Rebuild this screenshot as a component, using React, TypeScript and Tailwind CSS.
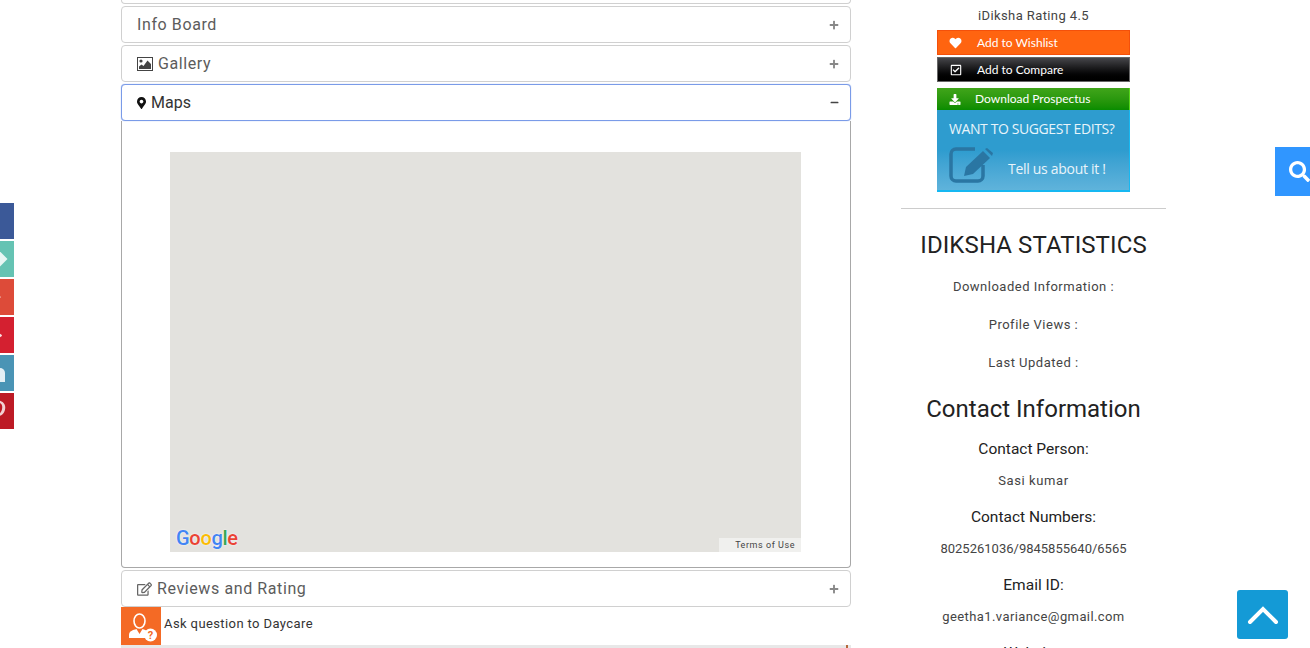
import React from 'react'
import { FaHeart, FaRegCheckSquare, FaDownload, FaMapMarkerAlt, FaRegEdit, FaPlus, FaMinus, FaSearch, FaFacebookF, FaGooglePlusG, FaPlay, FaPinterestP } from 'react-icons/fa'

const din = "font-['Roboto',sans-serif]"
const lato = "font-['Lato',sans-serif]"
const open = "font-['Open_Sans',sans-serif]"

const socials = [
  { bg: 'bg-[#3b5998]', icon: <FaFacebookF className="-ml-[13px] h-[16px] w-[14px] shrink-0 text-white/80" /> },
  { bg: 'bg-[#65c3b3]', icon: <div className="-ml-[7px] h-[12px] w-[12px] shrink-0 rotate-45 bg-white/85" /> },
  { bg: 'bg-[#dd4b39]', icon: <FaGooglePlusG className="-ml-[19px] h-[18px] w-[20px] shrink-0 text-white/60" /> },
  { bg: 'bg-[#d42030]', icon: <FaPlay className="-ml-[8px] h-[9px] w-[12px] shrink-0 text-white/85" /> },
  { bg: 'bg-[#4a94b5]', icon: <div className="mt-[4px] h-[14px] w-[5px] shrink-0 rounded-tr-[5px] bg-white/85" /> },
  { bg: 'bg-[#bd1a25]', icon: <FaPinterestP className="-ml-[12px] h-[22px] w-[18px] shrink-0 text-white/80" /> },
]

const PictureIcon = () => (
  <svg viewBox="0 0 16 14" className="h-[14px] w-[16px]">
    <rect x="0.5" y="0.5" width="15" height="13" fill="none" stroke="#444" />
    <circle cx="4" cy="4" r="1.6" fill="#444" />
    <path d="M2 12V9.5l2.5-2 2 1.5L10.5 3.5 14 7v5z" fill="#444" />
  </svg>
)

const AccordionRow = ({ title, icon, isOpen }: { title: string; icon?: React.ReactNode; isOpen?: boolean }) => (
  <div
    className={`flex h-[37px] shrink-0 items-center justify-between rounded-[4px] border bg-white pl-[15px] pr-[11px] ${
      isOpen ? 'border-[#7a9be8] text-[#333] shadow-[0_0_1px_#7a9be8]' : 'border-[#d0d0d0] text-[#5c5c5c]'
    }`}
  >
    <span className={`flex items-center gap-[5px] text-[16px] ${isOpen ? 'tracking-normal' : 'tracking-[0.6px]'}`}>
      {icon}
      {title}
    </span>
    {isOpen ? <FaMinus className="h-[9px] w-[9px] text-[#444]" /> : <FaPlus className="h-[10px] w-[10px] text-[#888]" />}
  </div>
)

const SideButton = ({ icon, label, className, labelClass }: { icon: React.ReactNode; label: string; className: string; labelClass: string }) => (
  <div className={`flex shrink-0 items-center text-[12px] text-white ${lato} ${className}`}>
    <span className="flex w-[35px] justify-center">{icon}</span>
    <span className={labelClass}>{label}</span>
  </div>
)

const Stat = ({ children }: { children: React.ReactNode }) => (
  <p className="text-center text-[13px] leading-[18px] tracking-[0.5px] text-[#444]">{children}</p>
)

export default function App() {
  return (
    <div className={`relative flex h-[648px] w-[1310px] overflow-hidden bg-white ${din}`}>
      {/* Left column */}
      <div className="ml-[121px] flex w-[730px] flex-col">
        <div className="h-[4px] shrink-0 rounded-b-[4px] border-x border-b border-[#d0d0d0]" />
        <div className="mt-[2px] flex flex-col gap-[2px]">
          <AccordionRow title="Info Board" />
          <AccordionRow title="Gallery" icon={<PictureIcon />} />
          <div className="flex flex-col">
            <AccordionRow title="Maps" isOpen icon={<FaMapMarkerAlt className="h-[14px] w-[9px] text-[#111]" />} />
            <div className="h-[447px] rounded-b-[4px] border-x border-b border-[#a8a8a8] px-[48px] pt-[31px]">
              <div className="relative h-[400px] w-[631px] bg-[#e3e2de]">
                <span className="absolute bottom-[1px] left-[6px] text-[20px] leading-[26px] font-medium tracking-[-0.3px] [text-shadow:0_0_2px_white]">
                  <span className="text-[#4285f4]">G</span>
                  <span className="text-[#ea4335]">o</span>
                  <span className="text-[#fbbc05]">o</span>
                  <span className="text-[#4285f4]">g</span>
                  <span className="text-[#34a853]">l</span>
                  <span className="text-[#ea4335]">e</span>
                </span>
                <span className="absolute right-0 bottom-0 flex h-[14px] w-[82px] items-center justify-end bg-[#f0f0ee] pt-[2px] pr-[6px] text-[9px] tracking-[0.55px] text-[#444]">
                  Terms of Use
                </span>
              </div>
            </div>
          </div>
          <AccordionRow title="Reviews and Rating" icon={<FaRegEdit className="h-[14px] w-[15px] text-[#666]" />} />
        </div>
        <div className="flex h-[38px] shrink-0 items-center">
          <div className="h-[38px] w-[40px] bg-[#f46a25]">
            <svg viewBox="0 0 40 38" className="h-[38px] w-[40px]" fill="none">
              <ellipse cx="18.5" cy="14" rx="5.5" ry="7" stroke="white" strokeWidth="1.6" />
              <path d="M8 31v-3c0-4 4-5 7.5-6l3 5 3-5c3 1 5 2 6 3.500V31z" fill="white" />
              <circle cx="29.500" cy="28" r="6.500" fill="white" />
              <text x="29.500" y="32" textAnchor="middle" fontSize="11" fontWeight="700" fill="#f46a25">?</text>
            </svg>
          </div>
          <span className="pb-[5px] pl-[3px] text-[13px] tracking-[0.4px] text-[#333]">Ask question to Daycare</span>
        </div>
        <div className="flex h-[3px] shrink-0 justify-end bg-[#e8e8e8]">
          <div className="mr-[3px] w-[2px] bg-[#b5673a]" />
        </div>
      </div>

      {/* Right column */}
      <div className="ml-[50px] flex w-[265px] flex-col items-center">
        <p className="mt-[7px] text-[13px] leading-[18px] tracking-[0.4px] text-[#444]">iDiksha Rating 4.5</p>
        <div className="mt-[5px] flex w-[193px] shrink-0 flex-col">
          <SideButton
            icon={<FaHeart className="h-[12px] w-[13px]" />}
            label="Add to Wishlist"
            className="h-[25px] border border-[#f4500a] bg-[#ff6410]"
            labelClass="pt-[1px] pl-[4px]"
          />
          <SideButton
            icon={<FaRegCheckSquare className="h-[12px] w-[12px]" />}
            label="Add to Compare"
            className="mt-[2px] h-[25px] border border-[#666] bg-gradient-to-b from-[#46464a] to-[#000]"
            labelClass="pt-[1px] pl-[4px]"
          />
          <SideButton
            icon={<FaDownload className="h-[11px] w-[12px]" />}
            label="Download Prospectus"
            className="mt-[6px] h-[22px] border-r border-[#55d61a] bg-gradient-to-b from-[#40a51a] to-[#078c00]"
            labelClass="pl-[3px]"
          />
          <div className={`h-[82px] border-r border-b-2 border-[#16b8f2] bg-gradient-to-b from-[#2e9ccf] from-50% to-[#5fb3db] pt-[9px] pl-[12px] ${open}`}>
            <p className="text-[14px] leading-[19px] tracking-[-0.4px] whitespace-nowrap text-[#e8f4fa]">WANT TO SUGGEST EDITS?</p>
            <div className="mt-[9px] flex items-center">
              <svg viewBox="0 0 46 36" className="h-[36px] w-[46px]" fill="none">
                <path d="M26 2H7a5 5 0 0 0-5 5v22a5 5 0 0 0 5 5h22a5 5 0 0 0 5-5V18" stroke="#2a76a3" strokeWidth="3.500" />
                <path d="M15 29l2-9L34 4l7 7-17 16z" fill="#2a76a3" />
                <path d="M36 2l2-1 6 5-1 3z" fill="#2a76a3" />
              </svg>
              <span className="ml-[13px] pt-[6px] text-[14px] tracking-[-0.3px] whitespace-nowrap text-[#e8f4fa]">Tell us about it !</span>
            </div>
          </div>
        </div>

        <div className="mt-[16px] h-px w-full shrink-0 bg-[#ccc]" />

        <h2 className="mt-[20px] text-[24px] leading-[32px] tracking-[0.1px] text-[#222]">IDIKSHA STATISTICS</h2>
        <div className="mt-[17px] flex flex-col gap-[20px]">
          <Stat>Downloaded Information :</Stat>
          <Stat>Profile Views :</Stat>
          <Stat>Last Updated :</Stat>
        </div>
        <h2 className="mt-[21px] text-[24px] leading-[32px] text-[#222]">Contact Information</h2>

        <div className="mt-[14px] flex flex-col items-center">
          <p className="text-[15.500px] leading-[20px] text-[#222]">Contact Person:</p>
          <p className="mt-[13px] text-[13px] leading-[18px] tracking-[0.6px] text-[#444]">Sasi kumar</p>
          <p className="mt-[17px] text-[15.500px] leading-[20px] text-[#222]">Contact Numbers:</p>
          <p className="mt-[13px] text-[13px] leading-[18px] text-[#444]">8025261036/9845855640/6565</p>
          <p className="mt-[17px] text-[15.500px] leading-[20px] text-[#222]">Email ID:</p>
          <p className="mt-[13px] text-[13px] leading-[18px] tracking-[0.4px] text-[#444]">geetha1.variance@gmail.com</p>
          <p className="mt-[17px] text-[15.500px] leading-[20px] text-[#222]">Website:</p>
        </div>
      </div>

      {/* Fixed widgets */}
      <div className="absolute top-[203px] left-0 flex w-[14px] flex-col gap-[2px] overflow-hidden">
        {socials.map((s, i) => (
          <div key={i} className={`flex h-[36px] items-center overflow-hidden ${s.bg}`}>
            {s.icon}
          </div>
        ))}
      </div>
      <div className="absolute top-[147px] left-[1275px] flex h-[49px] w-[35px] items-center overflow-hidden bg-[#3096ff] pl-[14px]">
        <FaSearch className="h-[21px] w-[21px] shrink-0 text-white" />
      </div>
      <div className="absolute top-[590px] left-[1237px] flex h-[49px] w-[51px] items-center justify-center rounded-[3px] bg-[#149ad6]">
        <svg viewBox="0 0 32 20" className="h-[20px] w-[32px]" fill="none" stroke="white" strokeWidth="4" strokeLinecap="round" strokeLinejoin="miter">
          <path d="M3 17L16 4l13 13" />
        </svg>
      </div>
    </div>
  )
}
